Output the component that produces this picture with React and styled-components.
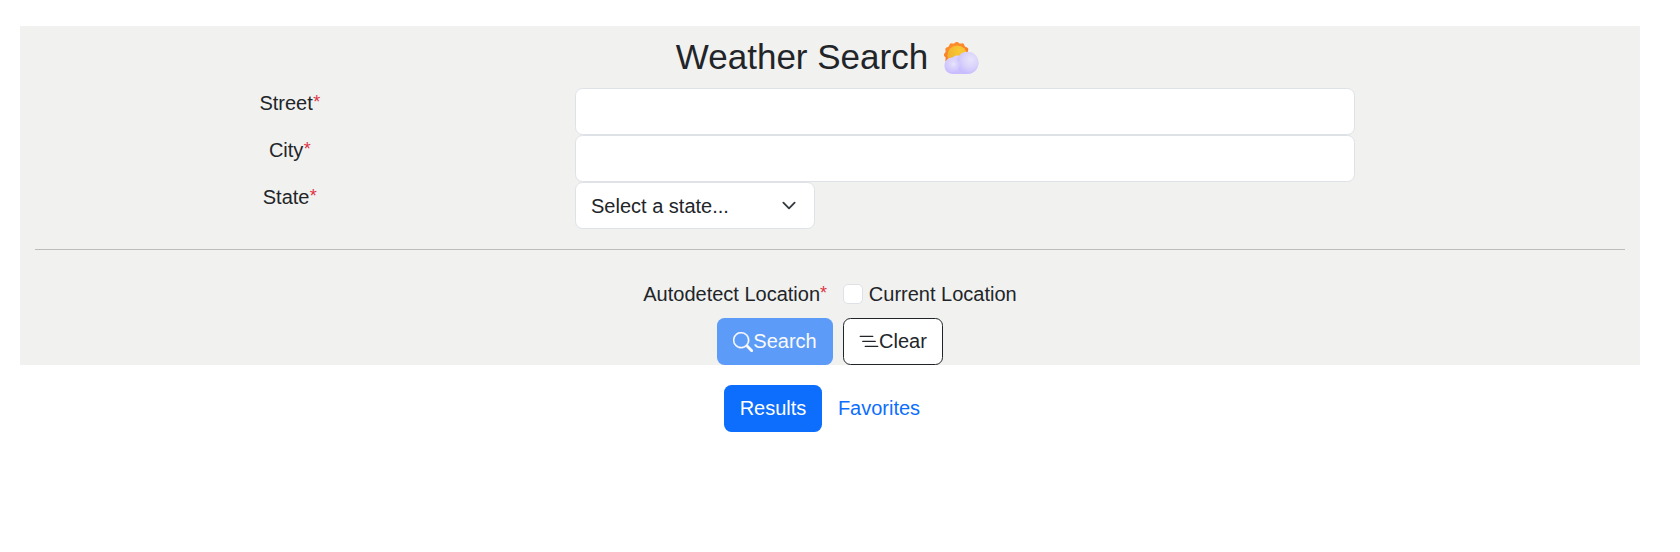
import React from "react";
import styled, { createGlobalStyle } from "styled-components";
import { BsSearch, BsListNested } from "react-icons/bs";

const GlobalStyle = createGlobalStyle`
  *, *::before, *::after { box-sizing: border-box; }
  body {
    margin: 0;
    background: #fff;
    color: #212529;
    font-family: "Liberation Sans", Arial, sans-serif;
    font-size: 20px;
    line-height: 30px;
  }
`;

const Page = styled.main`
  padding: 26px 40px 0 20px;
`;

const Panel = styled.form`
  height: 339px;
  padding-top: 10px;
  background: #f1f1ef;
`;

const Title = styled.h1`
  display: flex;
  justify-content: center;
  margin: 0 0 10px;
  padding-right: 5px;
  height: 42px;
  font-size: 35px;
  font-weight: 400;
  line-height: 42px;
`;

const CloudIcon = styled.svg`
  width: 35px;
  height: 33px;
  margin: 6px 0 0 16px;
`;

const Row = styled.div`
  display: grid;
  grid-template-columns: 540px 780px;
  column-gap: 15px;
  height: 47px;
`;

const Label = styled.label`
  text-align: center;
`;

const Star = styled.span`
  display: inline-block;
  width: 7.8px;
  color: #dc3545;
  font-size: 18px;
  line-height: 0;
  vertical-align: 2px;
`;

const Input = styled.input`
  width: 100%;
  height: 47px;
  padding: 7px 15px;
  border: 1px solid #dee2e6;
  border-radius: 7.5px;
  background: #fff;
  font: inherit;
`;

const Select = styled.button`
  display: flex;
  align-items: center;
  justify-content: space-between;
  width: 240px;
  height: 47px;
  padding: 0 15px;
  border: 1px solid #dee2e6;
  border-radius: 7.5px;
  background: #fff;
  color: inherit;
  font: inherit;
`;

const Divider = styled.hr`
  height: 1px;
  margin: 20px 15px 29px;
  border: 0;
  background: #bbbcbb;
`;

const Detect = styled.div`
  display: flex;
  justify-content: center;
  height: 30px;
`;

const Checkbox = styled.input`
  appearance: none;
  width: 20px;
  height: 20px;
  margin: 5px 6px 0 15px;
  border: 1px solid #dee2e6;
  border-radius: 5px;
  background: #fff;
`;

const Buttons = styled.div`
  display: flex;
  justify-content: center;
  gap: 10px;
  margin-top: 9px;
`;

const variants = {
  search: "background: #0d6efd; color: #fff; opacity: 0.65;",
  outline: "background: #fff; color: #212529; border-color: #212529;",
  active: "background: #0d6efd; color: #fff;",
  link: "background: transparent; color: #0d6efd;",
};

const Button = styled.button`
  display: flex;
  align-items: center;
  justify-content: center;
  width: ${(p) => p.$width}px;
  height: 47px;
  padding: 0;
  border: 1px solid transparent;
  border-radius: 7.5px;
  font: inherit;
  white-space: nowrap;
  ${(p) => variants[p.$variant]}

  svg {
    flex: none;
    width: 20px;
    height: 20px;
  }
`;

const Caption = styled.span`
  padding-bottom: 1px;
`;

const Tabs = styled.nav`
  display: flex;
  justify-content: center;
  margin-top: 20px;
`;

function sunPath(cx, cy, r, bumps) {
  const points = [];
  for (let i = 0; i < bumps * 8; i += 1) {
    const a = (i / (bumps * 8)) * Math.PI * 2;
    const d = r + 0.7 * Math.cos(a * bumps);
    points.push(`${(cx + d * Math.sin(a)).toFixed(2)} ${(cy - d * Math.cos(a)).toFixed(2)}`);
  }
  return `M${points.join("L")}Z`;
}

const SunCloud = () => (
  <CloudIcon viewBox="0 0 35 33" aria-hidden="true">
    <defs>
      <linearGradient id="rays" x1="0" y1="0" x2="0.4" y2="1">
        <stop offset="0" stopColor="#ff942b" />
        <stop offset="1" stopColor="#f5702c" />
      </linearGradient>
      <radialGradient id="sun" cx="0.65" cy="0.25" r="0.8">
        <stop offset="0" stopColor="#f9c934" />
        <stop offset="1" stopColor="#eeb02d" />
      </radialGradient>
      <linearGradient id="base" x1="0" y1="0" x2="0" y2="1">
        <stop offset="0" stopColor="#dcd7fb" />
        <stop offset="1" stopColor="#c9bbff" />
      </linearGradient>
      <radialGradient id="puff" cx="0.65" cy="0.35" r="0.7">
        <stop offset="0" stopColor="#e8e3fa" />
        <stop offset="0.5" stopColor="#dad4fb" />
        <stop offset="1" stopColor="#c6bafd" />
      </radialGradient>
      <radialGradient id="smallPuff" cx="0.55" cy="0.42" r="0.55">
        <stop offset="0" stopColor="#e9e5fa" />
        <stop offset="1" stopColor="#d6cffd" stopOpacity="0.3" />
      </radialGradient>
    </defs>
    <path d={sunPath(12.8, 12.8, 12.3, 12)} fill="url(#rays)" />
    <circle cx="13.2" cy="13.2" r="9.8" fill="url(#sun)" />
    <path
      d="M8.2 32A8 8 0 0 1 .4 23.8C.4 18.4 4.6 15.2 8.6 15.5C10.6 13.6 13.2 13.2 15.2 14C17 11 20 9.8 23.6 9.8C29.8 9.8 34.4 14.6 34.4 20.8S29.8 32 23.6 32Z"
      fill="url(#base)"
    />
    <circle cx="23.5" cy="20.9" r="10.9" fill="url(#puff)" />
    <circle cx="8.8" cy="23.2" r="7" fill="url(#smallPuff)" />
  </CloudIcon>
);

const Chevron = () => (
  <svg width="20" height="15" viewBox="0 0 16 16" fill="none" aria-hidden="true">
    <path
      d="m2 5 6 6 6-6"
      stroke="#343a40"
      strokeWidth="2"
      strokeLinecap="round"
      strokeLinejoin="round"
    />
  </svg>
);

const Required = () => <Star>*</Star>;

export default function App() {
  return (
    <>
      <GlobalStyle />
      <Page>
        <Panel onSubmit={(e) => e.preventDefault()}>
          <Title>
            Weather Search
            <SunCloud />
          </Title>
          <Row>
            <Label htmlFor="street">Street<Required /></Label>
            <Input id="street" />
          </Row>
          <Row>
            <Label htmlFor="city">City<Required /></Label>
            <Input id="city" />
          </Row>
          <Row>
            <Label htmlFor="state">State<Required /></Label>
            <Select id="state" type="button">
              Select a state...
              <Chevron />
            </Select>
          </Row>
          <Divider />
          <Detect>
            <span>Autodetect Location<Required /></span>
            <Checkbox type="checkbox" id="current" />
            <label htmlFor="current">Current Location</label>
          </Detect>
          <Buttons>
            <Button type="button" $variant="search" $width={116}>
              <BsSearch strokeWidth="0.3" />
              <Caption>Search</Caption>
            </Button>
            <Button type="button" $variant="outline" $width={100}>
              <BsListNested />
              <Caption>Clear</Caption>
            </Button>
          </Buttons>
        </Panel>
        <Tabs>
          <Button type="button" $variant="active" $width={98}>
            <Caption>Results</Caption>
          </Button>
          <Button type="button" $variant="link" $width={114}>
            <Caption>Favorites</Caption>
          </Button>
        </Tabs>
      </Page>
    </>
  );
}
